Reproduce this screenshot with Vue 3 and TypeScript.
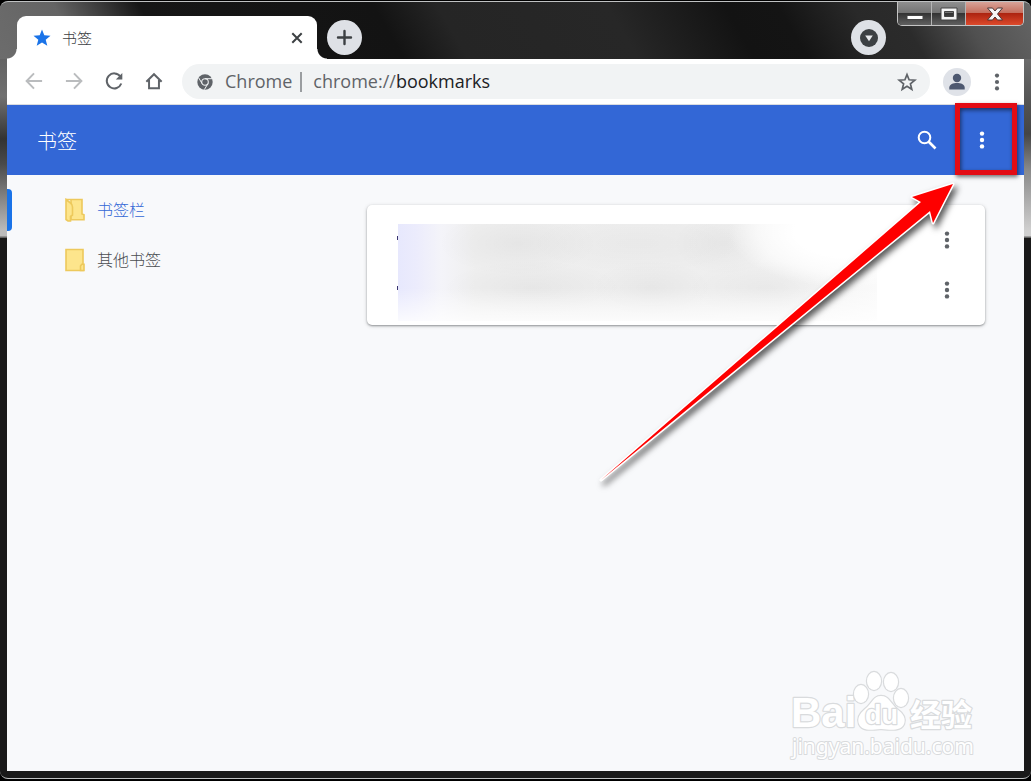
<script setup lang="ts">
import { ref } from 'vue'

interface Folder {
  id: number
  name: string
  open: boolean
}

const folders: Folder[] = [
  { id: 1, name: '书签栏', open: true },
  { id: 2, name: '其他书签', open: false },
]
const selected = ref<number>(1)
const address = ref<string>('bookmarks')
const rows: number[] = [1, 2]
</script>

<template>
  <div class="window">
    <div class="tabstrip">
      <div class="tab">
        <svg class="tab-icon" width="18" height="18" viewBox="0 0 18 18" aria-hidden="true">
          <path d="M9 .5l2.3 5.8 6.2.4-4.8 4 1.6 6.1L9 13.4l-5.3 3.4 1.6-6.1-4.8-4 6.2-.4z" fill="#1a73e8" />
        </svg>
        <span class="tab-title">书签</span>
        <button class="tab-close" type="button" aria-label="关闭标签页">
          <svg width="12" height="12" viewBox="0 0 12 12"><path d="M1.300 1.300l9.400 9.400M10.700 1.300l-9.400 9.400" stroke="#3c4043" stroke-width="2" /></svg>
        </button>
      </div>
      <button class="round" type="button" aria-label="新标签页">
        <svg width="17" height="17" viewBox="0 0 17 17"><path d="M8.500 2v13M2 8.500h13" stroke="#3c4043" stroke-width="2.400" stroke-linecap="round" /></svg>
      </button>
      <button class="round search-tabs" type="button" aria-label="搜索标签页">
        <svg width="18" height="18" viewBox="0 0 18 18"><circle cx="9" cy="9" r="9" fill="#3c4043" /><path d="M5.200 6.500h7.600L9 12.200z" fill="#e8eaed" /></svg>
      </button>
      <div class="controls">
        <button class="ctl" type="button" aria-label="最小化">
          <svg width="18" height="14" viewBox="0 0 18 14"><rect x="1" y="8.500" width="16" height="4" fill="#fff" stroke="#444" /></svg>
        </button>
        <button class="ctl" type="button" aria-label="最大化">
          <svg width="18" height="14" viewBox="0 0 18 14"><path fill-rule="evenodd" d="M1 1h16v12H1zM4.500 4.500v5h9v-5z" fill="#f4f4f4" stroke="#444" /></svg>
        </button>
        <button class="ctl close" type="button" aria-label="关闭">
          <svg width="18" height="14" viewBox="0 0 18 14"><path d="M1.500 1h5L9 4l2.500-3h5l-5 6 5 6h-5L9 10l-2.500 3h-5l5-6z" fill="#f6f6f6" stroke="#4b3535" /></svg>
        </button>
      </div>
    </div>

    <div class="client">
      <div class="toolbar">
        <button class="nav" type="button" aria-label="后退">
          <svg width="18" height="18" viewBox="0 0 20 20" fill="none" stroke="#babcbe" stroke-width="2.200"><path d="M19 10H3M10 1.500L1.800 10l8.200 8.500" /></svg>
        </button>
        <button class="nav" type="button" aria-label="前进">
          <svg width="18" height="18" viewBox="0 0 20 20" fill="none" stroke="#babcbe" stroke-width="2.200"><path d="M1 10h16M10 1.500l8.200 8.500-8.200 8.500" /></svg>
        </button>
        <button class="nav" type="button" aria-label="重新加载">
          <svg width="20" height="20" viewBox="0 0 20 20"><path d="M16.300 5.400A7.500 7.500 0 1 0 17.300 12.500" fill="none" stroke="#5f6368" stroke-width="2" /><path d="M18.300 2v6.500h-6.500z" fill="#5f6368" /></svg>
        </button>
        <button class="nav" type="button" aria-label="主页">
          <svg width="18" height="18" viewBox="0 0 20 20"><path d="M1.500 10.800L10 2.500l8.500 8.300M4.500 8.800v9.200h11V8.800" fill="none" stroke="#5f6368" stroke-width="2.200" /></svg>
        </button>
        <div class="omnibox">
          <svg width="16" height="16" viewBox="0 0 16 16" aria-hidden="true">
            <circle cx="8" cy="8" r="7.700" fill="#5f6368" />
            <circle cx="8" cy="8" r="3.300" fill="#5f6368" stroke="#f1f3f4" stroke-width="1.100" />
            <path d="M8 4.700h7M5.100 9.600L1.700 3.900M10.900 9.600l-3.500 6" stroke="#f1f3f4" stroke-width="1" />
          </svg>
          <span class="origin">Chrome</span>
          <span class="divider"></span>
          <label class="scheme" for="address">chrome://</label>
          <input id="address" v-model="address" class="address" type="text" />
          <button class="bookmark" type="button" aria-label="为此标签页添加书签">
            <svg width="20" height="20" viewBox="0 0 20 20"><path d="M10 2.600l2.100 5.200 5.700.4-4.400 3.600 1.400 5.500L10 14.300l-4.800 3 1.400-5.500-4.400-3.600 5.700-.4z" fill="none" stroke="#5f6368" stroke-width="1.700" /></svg>
          </button>
        </div>
        <button class="avatar" type="button" aria-label="用户">
          <svg width="28" height="28" viewBox="0 0 28 28"><circle cx="14" cy="10" r="4.200" fill="#4d5870" /><path d="M6.300 21.500v-2c0-3.200 4-4.500 7.700-4.500s7.700 1.300 7.700 4.500v2z" fill="#4d5870" /></svg>
        </button>
        <button class="app-menu" type="button" aria-label="菜单">
          <svg width="6" height="18" viewBox="0 0 6 18" fill="#5f6368"><circle cx="3" cy="2.600" r="2.100" /><circle cx="3" cy="9" r="2.100" /><circle cx="3" cy="15.400" r="2.100" /></svg>
        </button>
      </div>

      <header class="header">
        <h1>书签</h1>
        <button class="header-btn" type="button" aria-label="搜索">
          <svg width="20" height="20" viewBox="0 0 20 20" fill="none" stroke="#fff"><circle cx="7.500" cy="7.500" r="5.800" stroke-width="2" /><path d="M11.500 11.500l7 7" stroke-width="2.600" /></svg>
        </button>
        <button class="header-btn marked" type="button" aria-label="更多">
          <svg width="6" height="18" viewBox="0 0 6 18" fill="#fff"><circle cx="3" cy="2.600" r="2.200" /><circle cx="3" cy="9" r="2.200" /><circle cx="3" cy="15.400" r="2.200" /></svg>
        </button>
      </header>

      <main class="content">
        <nav class="sidebar">
          <button
            v-for="folder in folders"
            :key="folder.id"
            type="button"
            class="folder"
            :class="{ active: selected === folder.id }"
            @click="selected = folder.id"
          >
            <svg width="20" height="24" viewBox="0 0 20 24" fill="#fde58c" stroke="#edc95c" stroke-width="1.600" aria-hidden="true">
              <template v-if="folder.open">
                <path d="M1 1.500h16v14.500l2 .8v5H6V1.500z" />
                <path d="M1 1.500l4.500 3.500c1.500 1.200 2 2.500 2 4v8l-2 1.500v4.500H3l-2-1.500z" />
              </template>
              <template v-else>
                <path d="M1 1.500h17v21H1z" />
                <path d="M15.500 22.500v-4.500l1.300-1.700H19v6.200z" />
              </template>
            </svg>
            <span>{{ folder.name }}</span>
          </button>
        </nav>
        <section class="card">
          <div v-for="row in rows" :key="row" class="row">
            <i class="speck"></i>
            <button class="row-menu" type="button" aria-label="更多操作">
              <svg width="6" height="18" viewBox="0 0 6 18" fill="#5f6368"><circle cx="3" cy="2.600" r="2.200" /><circle cx="3" cy="9" r="2.200" /><circle cx="3" cy="15.400" r="2.200" /></svg>
            </button>
          </div>
          <div class="smear"></div>
        </section>
      </main>

      <svg class="arrow" width="380" height="320" viewBox="590 175 380 320" aria-hidden="true">
        <path d="M601 480L921 202L912 197L953 184L933 223L930 211Z" fill="#fe0000" stroke="#fff" stroke-width="3" paint-order="stroke" stroke-linejoin="round" />
      </svg>

      <svg class="watermark" width="200" height="96" viewBox="0 0 200 96" role="img" aria-label="Baidu 经验">
        <g fill="#fff" stroke="#d9dbdd" stroke-width="2.400" stroke-linejoin="round" paint-order="stroke">
          <text x="6" y="61" class="wm-latin">Bai</text>
          <ellipse cx="76" cy="28" rx="7" ry="9" />
          <ellipse cx="89" cy="15" rx="7" ry="9" />
          <ellipse cx="106" cy="16" rx="7" ry="9" />
          <ellipse cx="116" cy="32" rx="7" ry="9" />
          <path d="M96 30c8 0 10 8 16 13 7 5 9 10 7 15-3 7-12 6-23 5-11 1-19 2-22-5-2-5 0-10 6-15 7-5 8-13 16-13z" />
          <text x="80" y="58" class="wm-du">du</text>
          <text x="125" y="60" class="wm-cjk">经验</text>
          <text x="7" y="88" class="wm-url">jingyan.baidu.com</text>
        </g>
      </svg>
    </div>
  </div>
</template>

<style>
body {
  margin: 0;
  background: #000;
}
#app {
  padding: 1px 0 2px;
}
</style>

<style scoped>
*,
*::before,
*::after {
  box-sizing: border-box;
}
button {
  display: flex;
  align-items: center;
  justify-content: center;
  flex: none;
  padding: 0;
  border: 0;
  background: none;
  font: inherit;
  color: inherit;
  cursor: pointer;
}
svg {
  display: block;
  flex: none;
}
.window {
  display: flex;
  flex-direction: column;
  min-height: calc(100vh - 3px);
  padding: 0 7px 7px;
  border: 0 solid #bfc1c2;
  border-width: 1px 0;
  border-radius: 8px;
  background:
    linear-gradient(60deg, #6c6c6c 0, #646464 8%, #474747 11%, #161616 16%, #131313 38%, #252525 44%, #272727 60%, #131313 71%, #141414 76%, #292929 83%, #2b2b2b 87%, #505050 93%, #666 100%) 0 0 / 100% 57px no-repeat,
    linear-gradient(#636363 0, #707070 38px, #333 80px, #4a4a4a 105px, #bcbcbc 172px, #bcbcbc 177px, #666 178px) 0 57px / 7px 179px no-repeat,
    linear-gradient(#6b6b6b 0, #555 40px, #454545 75px, #888 110px, #d0d0d0 172px, #d0d0d0 177px, #666 178px) 100% 57px / 7px 179px no-repeat,
    #191919;
  font-family: "Open Sans", "Noto Sans CJK SC", sans-serif;
}
.tabstrip {
  display: flex;
  align-items: flex-end;
  height: 57px;
  padding-left: 10px;
}
.tab {
  position: relative;
  display: flex;
  align-items: center;
  width: 300px;
  height: 43px;
  padding: 0 14px 0 16px;
  border-radius: 9px 9px 0 0;
  background: #fff;
}
.tab::before,
.tab::after {
  content: "";
  position: absolute;
  bottom: 0;
  width: 10px;
  height: 10px;
}
.tab::before {
  right: 100%;
  background: radial-gradient(circle at 0 0, transparent 9px, #fff 10px);
}
.tab::after {
  left: 100%;
  background: radial-gradient(circle at 100% 0, transparent 9px, #fff 10px);
}
.tab-title {
  flex: 1;
  margin-left: 11px;
  font-size: 15px;
  font-weight: 300;
  line-height: 20px;
  color: #3c4043;
}
.round {
  width: 35px;
  height: 35px;
  margin: 0 0 4px 10px;
  border-radius: 50%;
  background: #dee1e6;
}
.search-tabs {
  margin-left: auto;
}
.controls {
  display: flex;
  align-self: flex-start;
  height: 24px;
  margin-left: 11px;
  border: 1px solid #c4c4c4;
  border-top: 0;
  border-radius: 0 0 5px 5px;
  overflow: hidden;
}
.ctl {
  width: 34px;
  border-right: 1px solid #b5b5b5;
  background: linear-gradient(#8f8f8f, #747474 46%, #343434 50%, #606060);
}
.ctl.close {
  width: 57px;
  border-right: 0;
  background: linear-gradient(#d8a398, #c5705f 46%, #ad2410 50%, #dc4a2c);
}
.client {
  position: relative;
  display: flex;
  flex: 1;
  flex-direction: column;
  background: #f8f9fb;
}
.toolbar {
  display: flex;
  align-items: center;
  height: 46px;
  padding: 0 13px 0 7px;
  border-bottom: 1px solid #dadce0;
  background: #fff;
}
.nav {
  width: 40px;
  height: 35px;
  padding-bottom: 1px;
}
.omnibox {
  display: flex;
  flex: 1;
  align-items: center;
  min-width: 0;
  height: 35px;
  margin-left: 8px;
  padding: 0 13px 0 15px;
  border-radius: 18px;
  background: #f1f3f4;
  font-size: 18px;
  line-height: 24px;
  color: #5f6368;
}
.origin,
.scheme,
.address {
  padding: 0 0 2px;
}
.origin {
  margin-left: 12px;
}
.divider {
  width: 2px;
  height: 20px;
  margin: 0 11px 0 8px;
  background: #9a9da0;
}
.address {
  flex: 1;
  min-width: 0;
  height: 26px;
  border: 0;
  outline: 0;
  background: none;
  font: inherit;
  color: #202124;
}
.avatar {
  width: 28px;
  height: 28px;
  margin-left: 13px;
  border-radius: 50%;
  background: #dfe2e8;
}
.app-menu {
  width: 28px;
  height: 28px;
  margin-left: 12px;
}
.header {
  display: flex;
  align-items: center;
  gap: 15px;
  height: 70px;
  padding: 0 22px 0 30px;
  background: #3367d6;
  color: #fff;
}
h1 {
  flex: 1;
  margin: 0;
  padding-top: 3px;
  font-size: 20px;
  font-weight: 300;
  line-height: 28px;
}
.header-btn {
  width: 40px;
  height: 40px;
}
.marked {
  position: relative;
}
.marked::after {
  content: "";
  position: absolute;
  top: -17px;
  left: -7px;
  width: 62px;
  height: 72px;
  border: 5px solid #e30b14;
  box-shadow: 1px 2px 4px rgba(0, 0, 0, 0.55), inset 1px 2px 4px rgba(0, 0, 0, 0.55);
}
.content {
  display: flex;
  flex: 1;
  align-items: flex-start;
}
.sidebar {
  flex: none;
  width: 360px;
  padding-top: 10px;
}
.folder {
  position: relative;
  justify-content: flex-start;
  gap: 12px;
  width: 100%;
  height: 50px;
  padding-left: 58px;
  font-size: 16px;
  font-weight: 300;
  line-height: 24px;
  color: #4a4d51;
}
.folder.active {
  color: #3367d6;
}
.folder.active::before {
  content: "";
  position: absolute;
  top: 4px;
  left: 0;
  width: 5px;
  height: 42px;
  border-radius: 0 4px 4px 0;
  background: #1a73e8;
}
.card {
  position: relative;
  flex: 1;
  min-width: 0;
  margin: 30px 39px 30px 0;
  padding: 10px 18px 10px 30px;
  border-radius: 5px;
  background: #fff;
  box-shadow: 0 1px 2px rgba(60, 64, 67, 0.45), 0 1px 4px rgba(60, 64, 67, 0.2);
}
.row {
  display: flex;
  align-items: center;
  justify-content: space-between;
  height: 50px;
}
.speck {
  width: 1px;
  height: 4px;
  margin-bottom: 4px;
  background: #39346f;
}
.row-menu {
  width: 40px;
  height: 40px;
}
.smear {
  position: absolute;
  top: 19px;
  right: 108px;
  bottom: 4px;
  left: 31px;
  background:
    linear-gradient(transparent 66%, rgba(255, 255, 255, 0.8)),
    radial-gradient(ellipse 120px 56px at 94% 8%, #fff 45%, rgba(255, 255, 255, 0.6) 75%, transparent 100%),
    radial-gradient(ellipse 80px 32px at 25% 20%, rgba(0, 0, 0, 0.04), transparent),
    radial-gradient(ellipse 110px 30px at 50% 20%, rgba(0, 0, 0, 0.025), transparent),
    radial-gradient(ellipse 50px 32px at 68% 20%, rgba(0, 0, 0, 0.035), transparent),
    radial-gradient(ellipse 90px 28px at 28% 66%, rgba(0, 0, 0, 0.035), transparent),
    radial-gradient(ellipse 60px 28px at 53% 66%, rgba(0, 0, 0, 0.03), transparent),
    radial-gradient(ellipse 80px 28px at 77% 66%, rgba(0, 0, 0, 0.03), transparent),
    linear-gradient(90deg, #e7e8fd 0, #ececfc 4%, #f4f4f9 9%, #efefef 16%, #eee 60%, #f1f1f1 80%, #fafafa 100%);
}
.arrow {
  position: absolute;
  top: 116px;
  right: 54px;
  filter: drop-shadow(3px 4px 3px rgba(0, 0, 0, 0.65));
  pointer-events: none;
}
.watermark {
  position: absolute;
  right: 39px;
  bottom: 9px;
}
.wm-latin {
  font: bold 42px "Liberation Sans", sans-serif;
}
.wm-du {
  font: bold 27px "Liberation Sans", sans-serif;
}
.wm-cjk {
  font: bold 31px "Noto Sans CJK SC", sans-serif;
}
.wm-url {
  font: 21px "Noto Sans", sans-serif;
  stroke-width: 2px;
}
</style>
